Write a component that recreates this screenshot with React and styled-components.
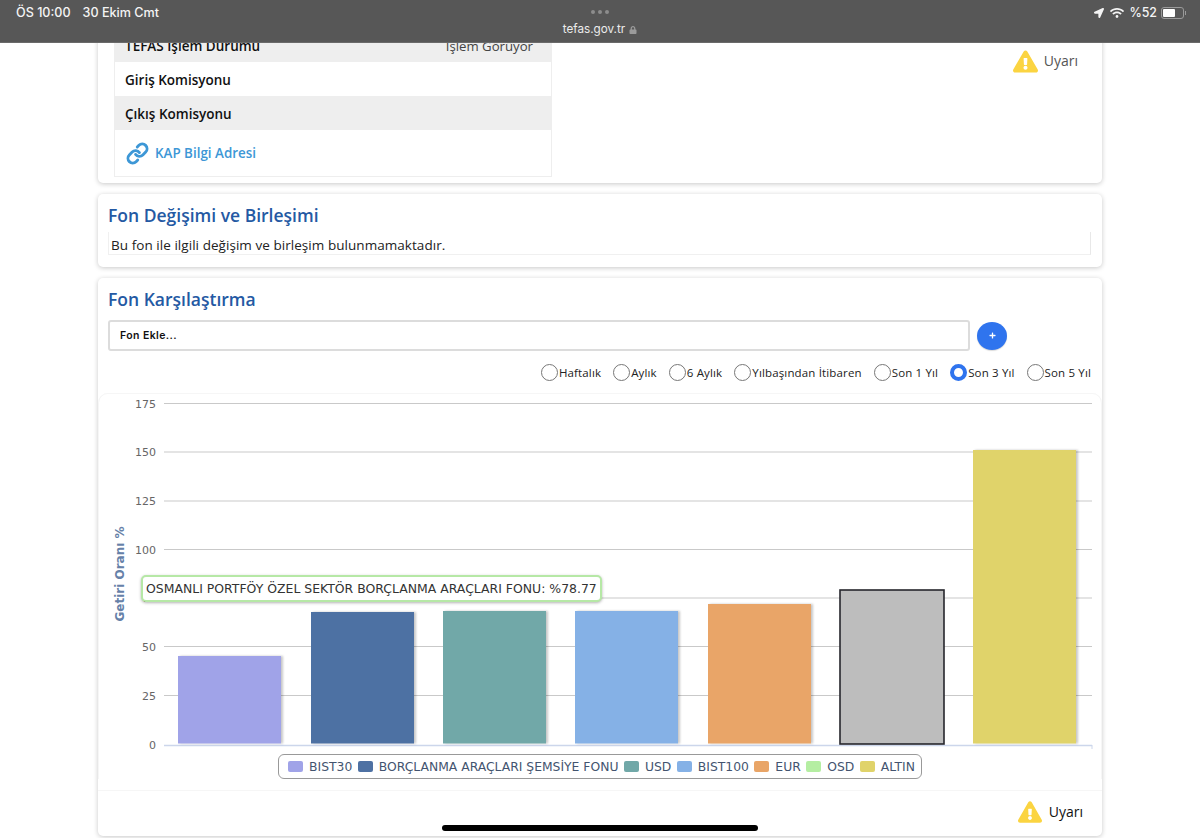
import React from 'react';
import styled, { createGlobalStyle } from 'styled-components';
import { FaExclamationTriangle, FaLocationArrow, FaWifi, FaLock, FaPlus } from 'react-icons/fa';
import { Link as LinkIcon } from 'lucide-react';

const Global = createGlobalStyle`
  html, body { margin: 0; padding: 0; height: 838px; overflow: hidden; background: #fff; }
  * { box-sizing: border-box; }
`;
const Trebuchet = `"Open Sans", "Noto Sans", sans-serif`;
const Chart = `"DejaVu Sans", Verdana, sans-serif`;

const Screen = styled.div`position: relative; width: 1200px; height: 838px; overflow: hidden; background: #fff;`;
const StatusBar = styled.header`
  position: absolute; top: 0; left: 0; right: 0; height: 43px; z-index: 5;
  background: #575757; color: #fff; font-family: Inter, sans-serif;
  border-bottom: 1px solid #6a6a6a;
`;
const StatusLeft = styled.div`position: absolute; left: 16px; top: 5px; display: flex; gap: 12px; font-size: 12.6px; font-weight: 500; line-height: 15px; color: #f4f4f4;`;
const StatusCenter = styled.div`position: absolute; left: 0; right: 0; top: 10px; display: flex; flex-direction: column; align-items: center; gap: 9px;`;
const Dots = styled.div`display: flex; gap: 3px; `;
const Dot = styled.i`width: 4px; height: 4px; border-radius: 50%; background: #8d8d8d;`;
const Url = styled.div`display: flex; align-items: center; gap: 4px; font-size: 11.7px; line-height: 13px; color: #ececec; svg { color: #9b9b9b; font-size: 8px; }`;
const StatusRight = styled.div`position: absolute; right: 14px; top: 5px; display: flex; align-items: center; gap: 5px; font-size: 12.4px; font-weight: 500; line-height: 15px; color: #f4f4f4;`;
const Battery = styled.div`
  position: relative; width: 23px; height: 12px; border: 1px solid #9a9a9a; border-radius: 3px; padding: 1px; margin-left: -1px; margin-right: 2px;
  &::before { content: ''; display: block; width: 12px; height: 8px; background: #fff; border-radius: 1px; }
  &::after { content: ''; position: absolute; right: -3px; top: 3px; width: 1px; height: 4px; background: #9a9a9a; }
`;
const HomeBar = styled.div`position: absolute; left: 442px; top: 825px; width: 316px; height: 6px; border-radius: 3px; background: #000; z-index: 5;`;

const Page = styled.main`display: flex; flex-direction: column; gap: 11px; padding: 8px 98px 0;`;
const Card = styled.section`
  background: #fff; border-radius: 5px; box-shadow: 0 1px 5px rgba(0,0,0,.22);
  padding: ${p => p.$pad};
`;
const InfoRow = styled.div`display: flex; justify-content: space-between; align-items: flex-start;`;
const InfoTable = styled.div`width: 438px; border: 1px solid #eee; border-top: 0; font-family: ${Trebuchet}; `;
const Row = styled.div`
  display: flex; justify-content: space-between; align-items: center; height: 34px; padding: 2px 18px 0 10px;
  background: ${p => (p.$shade ? '#eee' : '#fff')}; font-size: 13.5px; color: #111;
`;
const RowLabel = styled.span`font-weight: 600;`;
const RowValue = styled.span`color: #444; font-size: 13.2px;`;
const KapLink = styled.a`
  display: flex; align-items: center; gap: 6px; height: 46px; padding: 0 11px 0;
  color: #3d97d6; font-size: 13.4px; font-weight: 600;
`;
const Warning = styled.div`
  display: flex; align-items: center; gap: ${p => p.$gap}px; font-family: ${Trebuchet}; font-size: 14px;
  color: ${p => p.$color}; line-height: 24px; height: 24px;
  svg { color: #fbd441; font-size: ${p => p.$icon}px; }
`;
const WarnTop = styled(Warning)`margin: 21px 24px 0 0;`;
const WarnBottom = styled(Warning)`justify-content: flex-end; margin: 9px 9px 0 0;`;
const Title = styled.h2`
  margin: 0; font-family: ${Trebuchet}; font-size: 17.5px; font-weight: 600; line-height: 23px; color: #2459a3;
`;
const NoticeBox = styled.div`
  margin-top: 5px; height: 23px; border: 1px solid #f0f0f0; border-top: 0; border-right-color: #e8e8e8; padding-left: 2px;
  font-family: ${Trebuchet}; font-size: 13.5px; line-height: 27px; color: #222; letter-spacing: .05px;
`;
const AddRow = styled.div`display: flex; align-items: center; gap: 7px; margin-top: 9px;`;
const FundInput = styled.div`
  width: 862px; height: 31px; border: 2px solid #dcdcdc; border-radius: 3px; padding-left: 10px;
  font-family: Inter, sans-serif; font-size: 10.5px; font-weight: 600; line-height: 27px; color: #111; letter-spacing: .4px;
`;
const AddButton = styled.button`
  width: 30px; height: 28px; border: 0; padding: 0; border-radius: 50%; background: #2f74ee; color: #fff;
  display: flex; align-items: center; justify-content: center; box-shadow: 0 1px 1px rgba(0,0,0,.15); svg { font-size: 7px; }
`;
const RadioRow = styled.div`display: flex; justify-content: flex-end; gap: 12px; margin-top: 12px; padding-right: 1px; height: 19px;`;
const RadioLabel = styled.label`
  display: flex; align-items: center; gap: 1px; font-family: ${Trebuchet}; font-size: 11.5px; color: #222; letter-spacing: .15px; white-space: nowrap;
`;
const Radio = styled.input`
  appearance: none; margin: 0; width: 17px; height: 17px; border-radius: 50%; border: 1.5px solid #777; background: #fff;
  &:checked { border: 4.5px solid #2f74ee; }
`;
const ChartWrap = styled.div`
  position: relative; margin: 11px -10px 0; border-radius: 10px 10px 0 0;
  box-shadow: inset 0 1px 0 #f6f6f6, inset 1px 0 0 #f6f6f6, inset -1px 0 0 #f6f6f6;
`;
const ChartSvg = styled.svg`display: block; width: 1004px; height: 361px;`;
const Tooltip = styled.div`
  position: absolute; left: 43px; top: 182px; width: 461px; height: 27px; border: 2px solid #b6e8a6; border-radius: 5px;
  background: #fff; box-shadow: 0 1px 3px rgba(0,0,0,.3); padding-left: 3px;
  font-family: ${Chart}; font-size: 12.45px; line-height: 23px; color: #333; white-space: nowrap;
`;
const LegendWrap = styled.div`display: flex; justify-content: center;`;
const Legend = styled.div`
  display: flex; align-items: center; gap: 5.5px; height: 25px; padding: 0 6px 0 9px;
  border: 1px solid #999; border-radius: 6px; background: #fff;
`;
const LegendItem = styled.div`display: flex; align-items: center; gap: 6px; font-family: ${Chart}; font-size: 12.35px; color: #43546f; white-space: nowrap;`;
const Swatch = styled.i`width: 15px; height: 11px; border-radius: 2px; background: ${p => p.$c};`;
const FootLine = styled.div`margin: 11px -10px 0; height: 1px; background: #f6f6f6;`;

const bars = [
  { x: 178, w: 103, top: 656, c: '#a0a3e8' },
  { x: 311, w: 103, top: 612, c: '#4e71a3' },
  { x: 443, w: 103, top: 611, c: '#71a8a8' },
  { x: 575, w: 103, top: 611, c: '#85b1e6' },
  { x: 708, w: 103, top: 604, c: '#e9a567' },
  { x: 840, w: 104, top: 590, c: '#bdbdbd', stroke: '#26262c' },
  { x: 973, w: 103, top: 450, c: '#e0d36a' },
];
const ticks = [[175, 403.5], [150, 452], [125, 501], [100, 549.5], [75, 598], [50, 646.5], [25, 695.5], [0, 745]];
const legend = [
  ['BIST30', '#a0a3e8'], ['BORÇLANMA ARAÇLARI ŞEMSİYE FONU', '#4e71a3'], ['USD', '#71a8a8'], ['BIST100', '#85b1e6'],
  ['EUR', '#e9a567'], ['OSD', '#b5eea2'], ['ALTIN', '#e0d36a'],
];
const ranges = ['Haftalık', 'Aylık', '6 Aylık', 'Yılbaşından İtibaren', 'Son 1 Yıl', 'Son 3 Yıl', 'Son 5 Yıl'];

function BarChart() {
  return (
    <ChartSvg viewBox="98 393 1004 361">
      <defs>
        <filter id="barShadow" x="-5%" y="-5%" width="112%" height="110%">
          <feDropShadow dx="2" dy="0" stdDeviation="1" floodColor="#000" floodOpacity="0.22" />
        </filter>
      </defs>
      {ticks.map(([v, y]) => (
        <g key={v}>
          {v !== 0 && <line x1="164" x2="1092" y1={y} y2={y} stroke="#c9c9c9" strokeWidth="1" />}
          <text x="156" y={y + 4} textAnchor="end" fontFamily={Chart} fontSize="11" fill="#666">{v}</text>
        </g>
      ))}
      <line x1="164" x2="1092" y1="745.5" y2="745.5" stroke="#ccd6eb" strokeWidth="1.5" />
      <line x1="1092" x2="1092" y1="745" y2="749" stroke="#ccd6eb" />
      <text transform="translate(124,574) rotate(-90)" textAnchor="middle" fontFamily={Chart} fontSize="12" fontWeight="700" fill="#6681a8">Getiri Oranı %</text>
      {bars.map(b => (
        <rect key={b.x} x={b.x} y={b.top} width={b.w} height={(b.stroke ? 744 : 743.5) - b.top} fill={b.c}
          stroke={b.stroke || 'none'} strokeWidth={b.stroke ? 1.6 : 0} filter={b.stroke ? undefined : 'url(#barShadow)'} />
      ))}
    </ChartSvg>
  );
}

export default function App() {
  return (
    <Screen>
      <Global />
      <StatusBar>
        <StatusLeft><span>ÖS 10:00</span><span>30 Ekim Cmt</span></StatusLeft>
        <StatusCenter>
          <Dots><Dot /><Dot /><Dot /></Dots>
          <Url>tefas.gov.tr <FaLock /></Url>
        </StatusCenter>
        <StatusRight>
          <FaLocationArrow size={10} style={{ marginRight: 1 }} />
          <FaWifi size={14} />
          <span>%52</span>
          <Battery />
        </StatusRight>
      </StatusBar>
      <Page>
        <Card $pad="20px 0 6px 16px">
          <InfoRow>
            <InfoTable>
              <Row $shade><RowLabel>TEFAS İşlem Durumu</RowLabel><RowValue>İşlem Görüyor</RowValue></Row>
              <Row><RowLabel>Giriş Komisyonu</RowLabel></Row>
              <Row $shade><RowLabel>Çıkış Komisyonu</RowLabel></Row>
              <KapLink><LinkIcon size={23} strokeWidth={3} />KAP Bilgi Adresi</KapLink>
            </InfoTable>
            <WarnTop $gap={6} $icon={25} $color="#555"><FaExclamationTriangle />Uyarı</WarnTop>
          </InfoRow>
        </Card>
        <Card $pad="10px 11px 12px 10px">
          <Title>Fon Değişimi ve Birleşimi</Title>
          <NoticeBox>Bu fon ile ilgili değişim ve birleşim bulunmamaktadır.</NoticeBox>
        </Card>
        <Card $pad="10px 10px 12px">
          <Title>Fon Karşılaştırma</Title>
          <AddRow>
            <FundInput>Fon Ekle...</FundInput>
            <AddButton><FaPlus /></AddButton>
          </AddRow>
          <RadioRow>
            {ranges.map(r => (
              <RadioLabel key={r}><Radio type="radio" readOnly checked={r === 'Son 3 Yıl'} />{r}</RadioLabel>
            ))}
          </RadioRow>
          <ChartWrap>
            <BarChart />
            <Tooltip>OSMANLI PORTFÖY ÖZEL SEKTÖR BORÇLANMA ARAÇLARI FONU: %78.77</Tooltip>
            <LegendWrap>
              <Legend>
                {legend.map(([t, c]) => <LegendItem key={t}><Swatch $c={c} />{t}</LegendItem>)}
              </Legend>
            </LegendWrap>
          </ChartWrap>
          <FootLine />
          <WarnBottom $gap={7} $icon={24} $color="#111"><FaExclamationTriangle />Uyarı</WarnBottom>
        </Card>
      </Page>
      <HomeBar />
    </Screen>
  );
}
